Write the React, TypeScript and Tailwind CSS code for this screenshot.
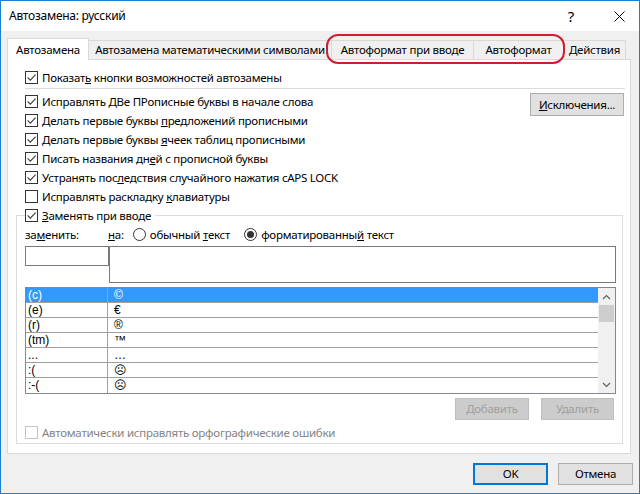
import React from 'react'

const font = "font-['Noto_Sans',sans-serif] text-[11.5px] tracking-[-0.25px]"

function Check({ on, disabled }: { on?: boolean; disabled?: boolean }) {
  return (
    <span
      className={`flex h-[13px] w-[13px] shrink-0 items-center justify-center border bg-white ${
        disabled ? 'border-[#c4c4c4]' : 'border-[#333333]'
      }`}
    >
      {on && (
        <svg width="11" height="11" viewBox="0 0 11 11">
          <path d="M1.6 5.4 L4.3 8.1 L9.6 2.6" fill="none" stroke="#3b3b3b" strokeWidth="1.1" />
        </svg>
      )}
    </span>
  )
}

function Radio({ on }: { on?: boolean }) {
  return (
    <span className="flex h-[13px] w-[13px] shrink-0 items-center justify-center rounded-full border border-[#333333] bg-white">
      {on && <span className="h-[7px] w-[7px] rounded-full bg-[#333333]" />}
    </span>
  )
}

function Row({ on, children }: { on?: boolean; children: React.ReactNode }) {
  return (
    <label className="flex h-[19px] items-center gap-[4px] whitespace-nowrap">
      <Check on={on} />
      <span>{children}</span>
    </label>
  )
}

const entries: [string, string][] = [
  ['(c)', '©'],
  ['(e)', '€'],
  ['(r)', '®'],
  ['(tm)', '™'],
  ['...', '…'],
  [':(', '☹'],
  [':-(', '☹'],
]

export default function App() {
  return (
    <div className={`relative flex h-[494px] w-[640px] flex-col border border-[#1b7fd4] bg-[#f0f0f0] text-black ${font}`}>
      {/* title bar */}
      <div className="flex h-[30px] shrink-0 items-center bg-white pl-[8px] text-[12px]">
        <span>Автозамена: русский</span>
        <span className="ml-auto mr-[40px] text-[15px]">?</span>
        <svg className="mr-[14px]" width="11" height="11" viewBox="0 0 11 11">
          <path d="M0.5 0.5 L10.5 10.5 M10.5 0.5 L0.5 10.5" stroke="#000" strokeWidth="1" />
        </svg>
      </div>

      {/* tabs */}
      <div className="ml-[6px] mt-[7px] flex h-[21px] items-end whitespace-nowrap">
        <div className="relative z-10 -mb-px flex h-[22px] w-[82px] items-center justify-center border border-b-0 border-[#d9d9d9] bg-white">
          Автозамена
        </div>
        <div className="flex h-[19px] w-[243px] items-center justify-center border border-b-0 border-l-0 border-[#d9d9d9]">
          Автозамена математическими символами
        </div>
        <div className="flex h-[19px] w-[142px] items-center justify-center border border-b-0 border-l-0 border-[#d9d9d9]">
          Автоформат при вводе
        </div>
        <div className="flex h-[19px] w-[90px] items-center justify-center border border-b-0 border-l-0 border-[#d9d9d9]">
          Автоформат
        </div>
        <div className="flex h-[19px] w-[62px] items-center justify-center border border-b-0 border-l-0 border-[#d9d9d9]">
          Действия
        </div>
      </div>

      {/* panel */}
      <div className="ml-[6px] w-[624px] border border-[#d9d9d9] bg-white pb-[9px] pt-[8px]">
        <div className="pl-[17px]">
          <Row on>
            Показат<u>ь</u> кнопки возможностей автозамены
          </Row>
        </div>
        <div className="ml-[17px] mr-[5px] mt-[1px] h-px bg-[#dcdcdc]" />
        <div className="mt-[3px] flex pl-[17px] pr-[6px]">
          <div className="flex flex-col">
            <Row on>
              Исправлять <u>Д</u>Ве ПРописные буквы в начале слова
            </Row>
            <Row on>
              Делать первые буквы <u>п</u>редложений прописными
            </Row>
            <Row on>
              Делать первые буквы <u>я</u>чеек таблиц прописными
            </Row>
            <Row on>
              Писать названия дн<u>е</u>й с прописной буквы
            </Row>
            <Row on>
              Устранять пос<u>л</u>едствия случайного нажатия cAPS LOCK
            </Row>
            <Row>
              Исправлять раскладку <u>к</u>лавиатуры
            </Row>
          </div>
          <button className="ml-auto mt-[1px] h-[23px] w-[94px] border border-[#adadad] bg-[#e1e1e1]">
            <u>И</u>сключения...
          </button>
        </div>

        <fieldset className="ml-[8px] mr-[7px] border border-[#dcdcdc] pb-[1px]">
          <legend className="ml-[8px] pr-[4px]">
            <Row on>
              <u>З</u>аменять при вводе
            </Row>
          </legend>
          <div className="pl-[8px] pr-[6px]">
            <div className="flex h-[19px] items-center whitespace-nowrap">
              <span className="w-[83px]">
                за<u>м</u>енить:
              </span>
              <span>
                <u>н</u>а:
              </span>
              <span className="ml-[9px] flex items-center gap-[4px]">
                <Radio />
                <span>
                  обычный <u>т</u>екст
                </span>
              </span>
              <span className="ml-[14px] flex items-center gap-[4px]">
                <Radio on />
                <span>
                  форматированны<u>й</u> текст
                </span>
              </span>
            </div>
            <div className="mt-[2px] flex items-start">
              <div className="h-[20px] w-[84px] border border-[#7a7a7a] bg-white" />
              <div className="h-[37px] flex-1 border border-[#7a7a7a] bg-white" />
            </div>
            <div className="mt-[4px] flex h-[107px] border border-[#828790] bg-white font-['Liberation_Sans',sans-serif] text-[12px] tracking-normal">
              <div className="flex flex-1 flex-col">
                {entries.map(([a, b], i) => (
                  <div
                    key={i}
                    className={`flex h-[15px] border-b border-[#a0a0a0] last:border-b-0 ${
                      i === 0 ? 'bg-[#3399ff] text-white' : ''
                    }`}
                  >
                    <span className="w-[82px] border-r border-[#a0a0a0] pl-[2px] leading-[14px]">{a}</span>
                    <span className="pl-[6px] leading-[14px]">{b}</span>
                  </div>
                ))}
              </div>
              <div className="flex w-[17px] flex-col bg-[#f0f0f0]">
                <div className="flex h-[17px] items-center justify-center">
                  <svg width="9" height="6" viewBox="0 0 9 6">
                    <path d="M1 5 L4.5 1.5 L8 5" fill="none" stroke="#606060" strokeWidth="1.2" />
                  </svg>
                </div>
                <div className="mx-[1px] h-[17px] bg-[#cdcdcd]" />
                <div className="mt-auto flex h-[17px] items-center justify-center">
                  <svg width="9" height="6" viewBox="0 0 9 6">
                    <path d="M1 1 L4.5 4.5 L8 1" fill="none" stroke="#606060" strokeWidth="1.2" />
                  </svg>
                </div>
              </div>
            </div>
            <div className="mr-[2px] mt-[4px] flex justify-end gap-[12px]">
              <button className="h-[22px] w-[74px] border border-[#bfbfbf] bg-[#cccccc] text-[#a0a0a0]">Добавить</button>
              <button className="h-[22px] w-[73px] border border-[#bfbfbf] bg-[#cccccc] text-[#a0a0a0]">Удалить</button>
            </div>
            <label className="mt-[3px] flex h-[19px] items-center gap-[4px] text-[#838383]">
              <Check disabled />
              <span>Автоматически исправлять орфографические ошибки</span>
            </label>
          </div>
        </fieldset>
      </div>

      {/* footer */}
      <div className="mr-[6px] mt-[9px] flex justify-end gap-[10px]">
        <button className="h-[22px] w-[75px] border-2 border-[#0078d7] bg-[#e1e1e1]">OK</button>
        <button className="h-[22px] w-[75px] border border-[#adadad] bg-[#e1e1e1]">Отмена</button>
      </div>

      {/* annotation */}
      <div className="absolute left-[325px] top-[33px] h-[30px] w-[239px] rounded-[12px] border-2 border-[#cf1f2e]" />
    </div>
  )
}
